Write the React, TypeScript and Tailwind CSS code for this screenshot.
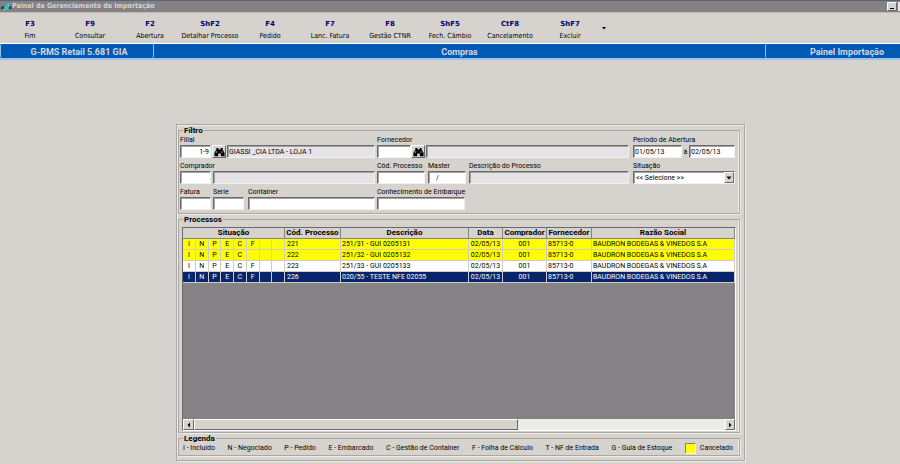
import type { ReactNode } from "react";
import { useState } from "react";

type ToolbarAction = {
  shortcut: string;
  label: string;
};

type Processo = {
  etapas: string[];
  codigo: string;
  descricao: string;
  data: string;
  comprador: string;
  fornecedor: string;
  razaoSocial: string;
  cancelado: boolean;
};

const actions: ToolbarAction[] = [
  { shortcut: "F3", label: "Fim" },
  { shortcut: "F9", label: "Consultar" },
  { shortcut: "F2", label: "Abertura" },
  { shortcut: "ShF2", label: "Detalhar Processo" },
  { shortcut: "F4", label: "Pedido" },
  { shortcut: "F7", label: "Lanc. Fatura" },
  { shortcut: "F8", label: "Gestão CTNR" },
  { shortcut: "ShF5", label: "Fech. Câmbio" },
  { shortcut: "CtF8", label: "Cancelamento" },
  { shortcut: "ShF7", label: "Excluir" }
];

const base = {
  data: "02/05/13",
  comprador: "001",
  fornecedor: "85713-0",
  razaoSocial: "BAUDRON BODEGAS & VINEDOS S.A"
};

const processos: Processo[] = [
  { ...base, etapas: ["I", "N", "P", "E", "C", "F", "", ""], codigo: "221", descricao: "251/31 - GUI 0205131", cancelado: true },
  { ...base, etapas: ["I", "N", "P", "E", "C", "", "", ""], codigo: "222", descricao: "251/32 - GUI 0205132", cancelado: true },
  { ...base, etapas: ["I", "N", "P", "E", "C", "F", "", ""], codigo: "223", descricao: "251/33 - GUI 0205133", cancelado: false },
  { ...base, etapas: ["I", "N", "P", "E", "C", "F", "", ""], codigo: "226", descricao: "020/55 - TESTE NFE 02055", cancelado: false }
];

const legenda = [
  "I - Incluído",
  "N - Negociado",
  "P - Pedido",
  "E - Embarcado",
  "C - Gestão de Container",
  "F - Folha de Cálculo",
  "T - NF de Entrada",
  "G - Guia de Estoque"
];

const sunken =
  "h-[13px] border border-t-[#6b696b] border-l-[#6b696b] border-r-[#f4f2ee] border-b-[#f4f2ee] shadow-[inset_1px_1px_0_#a5a2a5]";
const raised =
  "border border-t-white border-l-white border-r-[#6b696b] border-b-[#6b696b] bg-[#d6d3ce]";

const Group = ({ title, className, children }: { title: string; className: string; children: ReactNode }) => (
  <fieldset className="min-w-0 border border-[#a9a6a3] shadow-[inset_-1px_0_0_#efede9,1px_1px_0_#efede9]">
    <legend className="ml-1 bg-[#d6d3ce] px-px text-[8px] leading-[9px] font-bold">{title}</legend>
    <div className={className}>{children}</div>
  </fieldset>
);

type FieldProps = {
  id: string;
  label: string;
  value?: string;
  width: string;
  readOnly?: boolean;
  align?: string;
};

const Field = ({ id, label, value = "", width, readOnly = false, align = "pl-px" }: FieldProps) => (
  <div className={`flex flex-col ${width}`}>
    <label htmlFor={id} className="h-[10px] leading-[10px] whitespace-nowrap">
      {label}
    </label>
    <input
      id={id}
      type="text"
      defaultValue={value}
      readOnly={readOnly}
      className={`w-full min-w-0 outline-none ${sunken} ${align} ${readOnly ? "bg-[#e6e3e6]" : "bg-white"}`}
    />
  </div>
);

const ReadOnlyBox = ({ name, value = "" }: { name: string; value?: string }) => (
  <input
    type="text"
    aria-label={name}
    value={value}
    readOnly
    className={`w-full min-w-0 flex-1 bg-[#e6e3e6] pl-px outline-none ${sunken}`}
  />
);

const SearchButton = ({ name }: { name: string }) => (
  <button type="button" aria-label={name} className={`flex h-[13px] w-[14px] shrink-0 items-center justify-center ${raised}`}>
    <svg viewBox="0 0 11 10" className="h-[10px] w-[11px]" fill="#000">
      <path d="M2.4 1h2v1.5h2.2V1h2v1.6L10.6 6v3.2H6.8V6.4H4.2v2.8H.4V6l2-3.4z" />
      <path d="M2 6.2 3 4M7.8 6.2 8.2 4.2" stroke="#fff" strokeWidth=".6" />
    </svg>
  </button>
);

const Triangle = ({ points }: { points: string }) => (
  <svg viewBox="0 0 6 6" className="h-[6px] w-[6px]">
    <polygon points={points} fill="#000" />
  </svg>
);

const TitleBar = () => (
  <header className="flex h-[13px] items-center border-t border-b border-t-[#5a6573] border-b-[#bdbab6] bg-[#848284] pl-px">
    <svg viewBox="0 0 11 10" className="h-[10px] w-[11px] shrink-0">
      <path d="M0 4.5h3v2.5H0zM8 4.5h2.6v2.5H8z" fill="#3a3a3c" />
      <path d="M2.5 9V6.5l2-1L5.5 3 8 1v3.5L6.5 7 4.5 8z" fill="#21dfe7" />
      <path d="M3.5 6.5 5 6M6.5 3.5v1.5" stroke="#0a7f88" strokeWidth=".8" />
    </svg>
    <h1 className="flex-1 text-[7px] leading-[11px] font-bold whitespace-nowrap text-[#d6d3ce] [font-family:'DejaVu_Sans_Condensed','DejaVu_Sans',sans-serif]">
      Painel de Gerenciamento de Importação
    </h1>
    <button type="button" aria-label="Minimizar" className={`flex h-[9px] w-[10px] items-end justify-center pb-px ${raised}`}>
      <span className="h-px w-1 bg-black" />
    </button>
    <span className="ml-px h-[9px] w-[2px] bg-[#e9e7e3]" />
  </header>
);

const Toolbar = () => (
  <nav className="flex h-[30px] items-start pt-[5px] [font-family:'DejaVu_Sans_Condensed','DejaVu_Sans',sans-serif]">
    {actions.map((action) => (
      <button key={action.label} type="button" className="flex w-[60px] shrink-0 flex-col items-center whitespace-nowrap">
        <span className="text-[7px] leading-[12px] font-bold text-[#00006b] [font-family:'DejaVu_Sans',sans-serif]">
          {action.shortcut}
        </span>
        <span className="text-[7px] leading-[12px]">{action.label}</span>
      </button>
    ))}
    <button type="button" aria-label="Mais opções" className="mt-[7px] ml-px">
      <Triangle points="1,2 5,2 3,4.5" />
    </button>
  </nav>
);

const StatusBar = () => (
  <div className="flex h-[17px] border-t border-b-2 border-t-white border-b-[#9cc3e7] bg-[#005ab5] text-[9px] leading-[16px] font-bold whitespace-nowrap text-[#d6d7de]">
    <div className="w-[154px] rounded-xs border-r border-l border-[#9cc3e7] pl-1 text-center">G-RMS Retail 5.681 GIA</div>
    <div className="flex-1 text-center">Compras</div>
    <div className="w-[135px] rounded-l-xs border-l border-[#9cc3e7] pr-4 text-right">Painel Importação</div>
  </div>
);

const Filtro = () => {
  const [situacao, setSituacao] = useState("");

  return (
    <Group title="Filtro" className="pr-1 pb-[3px] pl-px">
      <div className="flex flex-col gap-[3px]">
        <div className="flex">
          <div className="mr-[2px] flex w-[195px] items-end gap-px">
            <Field id="filial" label="Filial" value="1-9" width="w-[31px]" align="pr-px text-right" />
            <SearchButton name="Pesquisar filial" />
            <ReadOnlyBox name="Nome da filial" value="GIASSI _CIA LTDA - LOJA 1" />
          </div>
          <div className="mr-1 flex flex-1 items-end">
            <Field id="fornecedor" label="Fornecedor" width="w-[34px]" />
            <SearchButton name="Pesquisar fornecedor" />
            <div className="ml-px flex flex-1">
              <ReadOnlyBox name="Nome do fornecedor" />
            </div>
          </div>
          <div className="flex w-[102px] items-end justify-between">
            <Field id="inicio" label="Período de Abertura" value="01/05/13" width="w-[49px]" />
            <label htmlFor="fim" className="leading-[12px]">
              à
            </label>
            <input id="fim" type="text" defaultValue="02/05/13" className={`w-[46px] bg-white pl-px outline-none ${sunken}`} />
          </div>
        </div>

        <div className="flex">
          <div className="mr-[2px] flex w-[195px] items-end gap-[2px]">
            <Field id="comprador" label="Comprador" width="w-[31px]" />
            <ReadOnlyBox name="Nome do comprador" />
          </div>
          <div className="mr-1 flex flex-1 gap-[3px]">
            <Field id="processo" label="Cód. Processo" width="w-[48px]" />
            <Field id="master" label="Master" value="/" width="w-[38px]" align="pl-[7px]" />
            <Field id="descricao" label="Descrição do Processo" width="flex-1" readOnly />
          </div>
          <div className="flex w-[102px] flex-col">
            <label htmlFor="situacao" className="h-[10px] leading-[10px]">
              Situação
            </label>
            <div className="relative">
              <select
                id="situacao"
                value={situacao}
                onChange={(event) => setSituacao(event.target.value)}
                className={`block w-full appearance-none bg-white pt-px pl-[2px] leading-[11px] outline-none ${sunken}`}
              >
                <option value="">&lt;&lt; Selecione &gt;&gt;</option>
                <option value="cancelado">Cancelado</option>
              </select>
              <span className={`pointer-events-none absolute top-px right-px flex h-[11px] w-[10px] items-center justify-center ${raised}`}>
                <Triangle points="0.5,1.5 5.5,1.5 3,4.5" />
              </span>
            </div>
          </div>
        </div>

        <div className="flex gap-[2px]">
          <div className="flex w-[195px] gap-[2px]">
            <Field id="fatura" label="Fatura" width="w-[31px]" />
            <Field id="serie" label="Serie" width="w-[33px] pr-[2px]" />
            <Field id="container" label="Container" width="flex-1" />
          </div>
          <Field id="conhecimento" label="Conhecimento de Embarque" width="w-[88px]" />
        </div>
      </div>
    </Group>
  );
};

const th = "h-[11px] border-r border-b border-[#848284] bg-[#d6d3ce] text-[8px] leading-[10px] font-bold";
const td = "h-[11px] border-r border-b border-[#cfccc8] leading-[10px]";

const ProcessoTable = () => {
  const [selected, setSelected] = useState("226");

  const rowColor = (processo: Processo) => {
    if (processo.codigo === selected) return "bg-[#08246b] text-white";
    return processo.cancelado ? "bg-[#ffff00]" : "bg-white";
  };

  return (
    <table className="w-full table-fixed border-separate border-spacing-0 whitespace-nowrap">
      <thead>
        <tr>
          <th colSpan={8} className={`w-[102px] ${th}`}>Situação</th>
          <th className={`w-[56px] ${th}`}>Cód. Processo</th>
          <th className={`w-[128px] ${th}`}>Descrição</th>
          <th className={`w-[34px] ${th}`}>Data</th>
          <th className={`w-[44px] ${th}`}>Comprador</th>
          <th className={`w-[45px] ${th}`}>Fornecedor</th>
          <th className={th}>Razão Social</th>
        </tr>
      </thead>
      <tbody>
        {processos.map((processo) => (
          <tr key={processo.codigo} className={rowColor(processo)} onClick={() => setSelected(processo.codigo)}>
            {processo.etapas.map((etapa, index) => (
              <td key={index} className={`text-center ${td}`}>{etapa}</td>
            ))}
            <td className={`pl-[2px] ${td}`}>{processo.codigo}</td>
            <td className={`pl-px ${td}`}>{processo.descricao}</td>
            <td className={`text-center ${td}`}>{processo.data}</td>
            <td className={`text-center ${td}`}>{processo.comprador}</td>
            <td className={`pl-px ${td}`}>{processo.fornecedor}</td>
            <td className={`pl-px ${td}`}>{processo.razaoSocial}</td>
          </tr>
        ))}
      </tbody>
    </table>
  );
};

const ScrollBar = () => (
  <div className="flex h-[11px] bg-[#edebe8]">
    <button type="button" aria-label="Rolar para a esquerda" className={`flex w-[11px] items-center justify-center ${raised}`}>
      <Triangle points="4,0.5 4,5.5 1.5,3" />
    </button>
    <div className="flex flex-1">
      <div className={`w-[61%] ${raised}`} />
    </div>
    <button type="button" aria-label="Rolar para a direita" className={`flex w-[10px] items-center justify-center ${raised}`}>
      <Triangle points="2,0.5 2,5.5 4.5,3" />
    </button>
  </div>
);

const App = () => (
  <div className="min-h-screen bg-[#d6d3ce] text-[7px] text-black [font-family:Roboto,'Liberation_Sans',sans-serif]">
    <TitleBar />
    <Toolbar />
    <StatusBar />
    <main className="pt-[64px] pr-[155px] pl-[176px]">
      <div className="flex flex-col gap-px border border-[#a9a6a3] pt-px pr-1 pb-1 pl-px shadow-[inset_1px_1px_0_#efede9,1px_1px_0_#efede9]">
        <Filtro />
        <Group title="Processos" className="px-[3px] pt-[3px] pb-px">
          <div className="flex min-h-[204px] flex-col border border-t-[#6b696b] border-l-[#6b696b] border-r-white border-b-white bg-[#848284]">
            <div className="flex-1">
              <ProcessoTable />
            </div>
            <ScrollBar />
          </div>
        </Group>
        <Group title="Legenda" className="px-1 pb-px">
          <div className="flex items-center justify-between pr-[2px] whitespace-nowrap">
            {legenda.map((item) => (
              <span key={item}>{item}</span>
            ))}
            <span className="flex items-center gap-1">
              <span className="h-[11px] w-[11px] border border-t-[#848284] border-r-white border-b-white border-l-[#848284] bg-[#ffff00]" />
              Cancelado
            </span>
          </div>
        </Group>
      </div>
    </main>
  </div>
);

export default App;
